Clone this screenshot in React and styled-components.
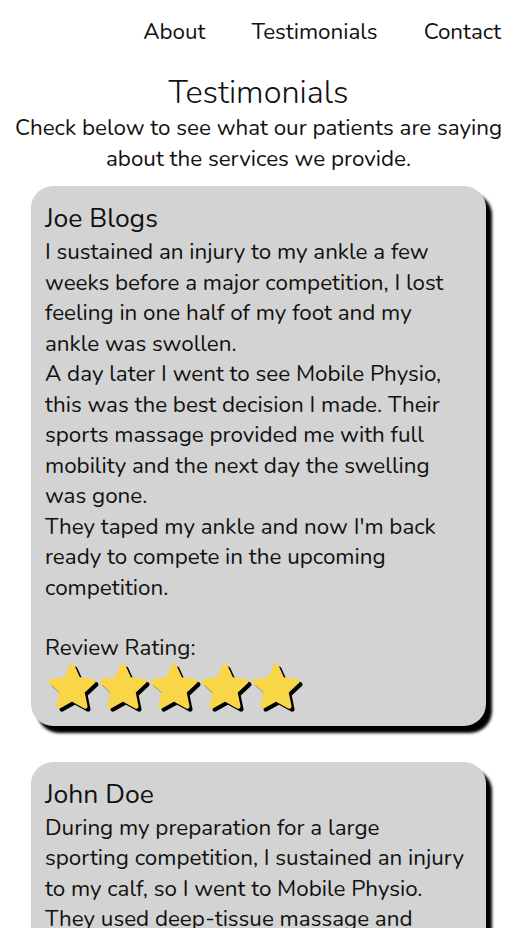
import React from 'react';
import styled, { createGlobalStyle } from 'styled-components';

const GlobalStyle = createGlobalStyle`
  body {
    margin: 0;
    background: #fff;
    font-family: "Nunito", "Lato", "Noto Sans", sans-serif;
    color: #111;
  }
`;

const Nav = styled.nav`
  display: flex;
  justify-content: flex-end;
  gap: 46px;
  padding: 16px 9px 0 0;
  height: 44px;
  box-sizing: border-box;
  font-size: 22.4px;
`;

const NavLink = styled.a`
  color: #111;
  text-decoration: none;
  line-height: 32px;
`;

const Main = styled.main`
  padding: 28px 0 40px 7px;
  display: flex;
  flex-direction: column;
  align-items: center;
`;

const Title = styled.h1`
  margin: 0;
  font-size: 32.5px;
  font-weight: 300;
  line-height: 40px;
`;

const Intro = styled.p`
  margin: 0 0 12px;
  font-size: 22.4px;
  line-height: 31px;
  text-align: center;
`;

const Card = styled.section`
  align-self: flex-start;
  margin: 0 0 36px 24px;
  width: 455px;
  box-sizing: border-box;
  padding: 16px 16.6px 14px 14px;
  background: #d3d3d3;
  border-radius: 22px;
  box-shadow: 6px 7px 3px #000;
`;

const Name = styled.h2`
  margin: 0 0 3px;
  font-size: 26.5px;
  font-weight: 400;
  line-height: 32px;
`;

const Body = styled.p`
  margin: 0;
  font-size: 22.4px;
  line-height: 30.5px;
`;

const RatingLabel = styled.p`
  margin: 30.5px 0 0;
  font-size: 22.4px;
  line-height: 28px;
`;

const Stars = styled.div`
  display: flex;
  gap: 1px;
  padding-left: 2px;
`;

const StarIcon = styled.svg`
  width: 50px;
  height: 50px;
  filter: drop-shadow(3px 3px 0 #000);
`;

const Star = () => (
  <StarIcon viewBox="0 0 50 50">
    <path
      d="M25 4 L31.2 17.6 L46 19.4 L35 29.6 L38 44.2 L25 36.8 L12 44.2 L15 29.6 L4 19.4 L18.8 17.6 Z"
      fill="#f8d648"
      stroke="#f8d648"
      strokeWidth="5"
      strokeLinejoin="round"
    />
  </StarIcon>
);

const reviews = [
  {
    name: 'Joe Blogs',
    lines: [
      'I sustained an injury to my ankle a few weeks before a major competition, I lost feeling in one half of my foot and my ankle was swollen.',
      'A day later I went to see Mobile Physio, this was the best decision I made. Their sports massage provided me with full mobility and the next day the swelling was gone.',
      "They taped my ankle and now I'm back ready to compete in the upcoming competition.",
    ],
    rating: 5,
  },
  {
    name: 'John Doe',
    lines: [
      'During my preparation for a large',
      'sporting competition, I sustained an injury to my calf, so I went to Mobile Physio. They used deep-tissue massage and stretching to get me back to full fitness in time for the event.',
    ],
    rating: 5,
  },
];

const App = () => (
  <>
    <GlobalStyle />
    <Nav>
      <NavLink href="#about">About</NavLink>
      <NavLink href="#testimonials">Testimonials</NavLink>
      <NavLink href="#contact">Contact</NavLink>
    </Nav>
    <Main>
      <Title>Testimonials</Title>
      <Intro>
        Check below to see what our patients are saying
        <br />
        about the services we provide.
      </Intro>
      {reviews.map((r) => (
        <Card key={r.name}>
          <Name>{r.name}</Name>
          {r.lines.map((l, i) => (
            <Body key={i}>{l}</Body>
          ))}
          <RatingLabel>Review Rating:</RatingLabel>
          <Stars>
            {Array.from({ length: r.rating }).map((_, i) => (
              <Star key={i} />
            ))}
          </Stars>
        </Card>
      ))}
    </Main>
  </>
);

export default App;
